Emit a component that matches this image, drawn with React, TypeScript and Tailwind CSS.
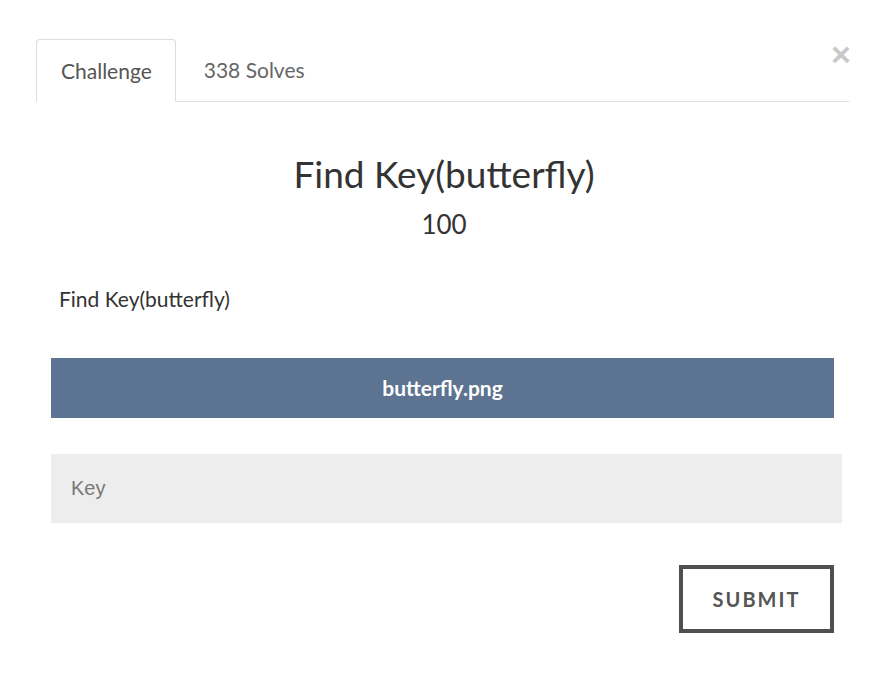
import { useState } from "react";

export default function App() {
  const [key, setKey] = useState("");

  return (
    <div className="relative w-[888px] h-[693px] bg-white font-['Lato','Noto_Sans',sans-serif] text-[#333]">
      {/* Fermer */}
      <button className="absolute left-[831px] top-[37px] text-[34px] leading-none font-bold text-[#c9c9c9] font-['Liberation_Sans',sans-serif]">
        ×
      </button>

      <div className="pt-[39px] px-[36px]">
        {/* Onglets */}
        <div className="flex w-[813px] border-b border-[#dddddd]">
          <div className="h-[63px] -mb-px pl-[24px] pr-[23px] flex items-center border border-b-white border-[#dddddd] rounded-t-[4px] bg-white text-[21px] text-[#555]">
            Challenge
          </div>
          <div className="h-[62px] ml-[2px] px-[26px] flex items-center text-[21px] text-[#666]">
            338 Solves
          </div>
        </div>

        {/* En-tête */}
        <div className="flex flex-col items-center">
          <h3 className="mt-[50px] text-[37px] leading-[44px] text-[#333]">Find Key(butterfly)</h3>
          <h4 className="mt-[13px] text-[26px] leading-[30px] text-[#333]">100</h4>
        </div>

        <p className="mt-[47px] ml-[23px] text-[21px] leading-[26px] text-[#333]">Find Key(butterfly)</p>

        <div className="mt-[46px] ml-[15px] w-[783px] h-[60px] flex items-center justify-center bg-[#5c7391] text-white font-bold text-[21px]">
          butterfly.png
        </div>

        <input
          value={key}
          onChange={(e) => setKey(e.target.value)}
          placeholder="Key"
          className="mt-[36px] ml-[15px] w-[791px] h-[69px] block bg-[#ededed] px-[20px] text-[20px] font-['Liberation_Sans',sans-serif] text-[#555] placeholder:text-[#777] outline-none"
        />

        <div className="flex justify-end w-[798px] mt-[42px]">
          <button className="w-[155px] h-[68px] border-[4px] border-[#4f4f4f] bg-white text-[#555] font-bold text-[20px] tracking-[2px]">
            SUBMIT
          </button>
        </div>
      </div>
    </div>
  );
}
